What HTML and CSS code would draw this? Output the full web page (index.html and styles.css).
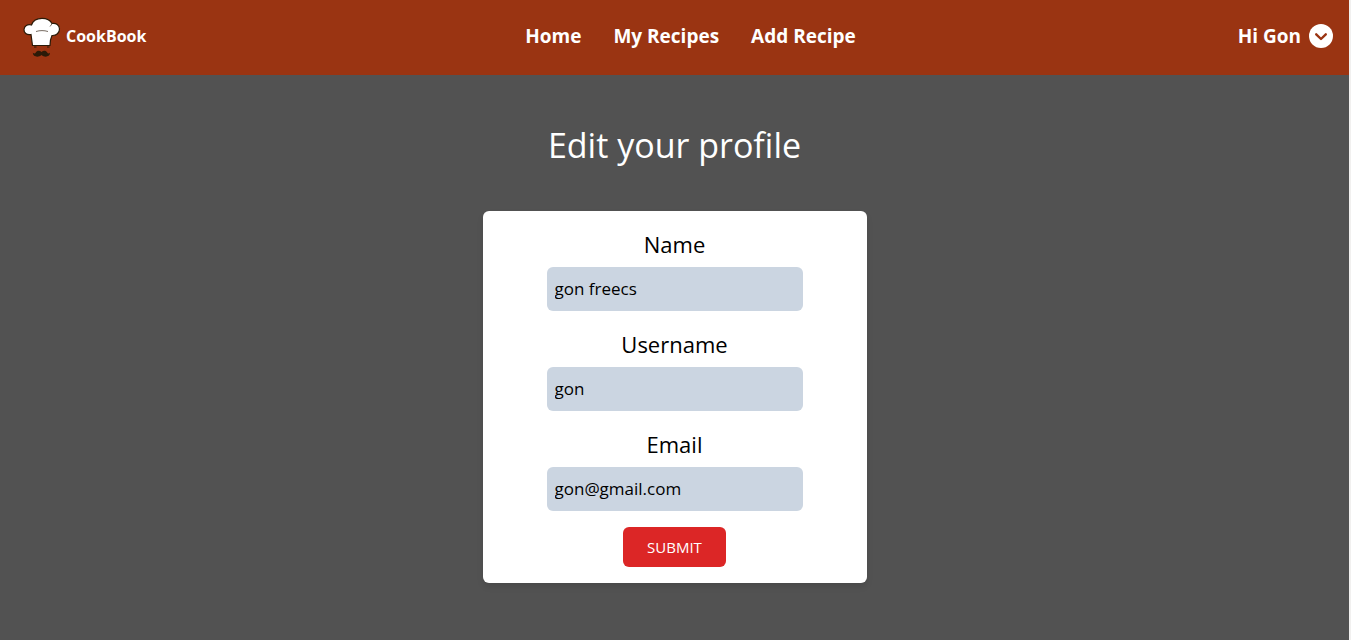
FILE: index.html
```html
<!DOCTYPE html>
<html lang="en">
<head>
<meta charset="utf-8">
<meta name="viewport" content="width=device-width, initial-scale=1">
<title>CookBook</title>
<link rel="stylesheet" href="styles.css">
</head>
<body class="page">
<header class="header">
  <a class="brand" href="#">
    <svg class="brand-logo" viewBox="0 -2 40 44" aria-hidden="true">
      <path d="M10.5 29.5 L9 18.5 C4.500 19.500 1.800 16.500 2 13.500 C2.300 9.800 5.500 8 9.500 9 C11 4.500 15.500 2.300 20 2.300 C25 2.300 28.500 4.500 30 7.500 C34 6.500 37.500 9.500 37.500 13 C37.500 17 34.500 19.700 30 19.500 C28.500 22.500 28 26 28 29.500 Z" fill="#fff" stroke="#2b1a08" stroke-width="1.200"/>
      <path d="M14 15.500 C18 14.300 22 14.300 26 15.500 M28 10.500 L30 7.800" fill="none" stroke="#54463a" stroke-width="0.800"/>
      <path d="M12 31 h2.500 M25 31 h2.500" fill="none" stroke="#2b1a08" stroke-width="1"/>
      <path d="M19.500 36 C17.500 34 14.800 34.500 13.800 36.600 C13 38 12 37.800 10.800 36.800 C10.800 41 16.500 41.800 19.500 39 C22.500 41.800 28 41 28 36.800 C27 37.800 26 38 25.200 36.600 C24.200 34.500 21.500 34 19.500 36 Z" fill="#2b1a08"/>
    </svg>
    <span>CookBook</span>
  </a>
  <nav class="nav">
    <a class="nav-link" href="#">Home</a>
    <a class="nav-link" href="#">My Recipes</a>
    <a class="nav-link" href="#">Add Recipe</a>
  </nav>
  <button class="account" type="button">
    <span>Hi Gon</span>
    <svg class="account-icon" viewBox="0 0 24 24" aria-hidden="true">
      <circle cx="12" cy="12" r="12" fill="#fff"/>
      <path d="M7.200 10.300 L12 15 L16.800 10.300" fill="none" stroke="#9a3412" stroke-width="2.400" stroke-linecap="round" stroke-linejoin="round"/>
    </svg>
  </button>
</header>
<main class="main">
  <h1 class="title">Edit your profile</h1>
  <form class="card">
    <div class="field">
      <label class="label" for="name">Name</label>
      <input class="input" id="name" type="text" value="gon freecs">
    </div>
    <div class="field">
      <label class="label" for="username">Username</label>
      <input class="input" id="username" type="text" value="gon">
    </div>
    <div class="field">
      <label class="label" for="email">Email</label>
      <input class="input" id="email" type="email" value="gon@gmail.com">
    </div>
    <button class="submit" type="submit">SUBMIT</button>
  </form>
</main>
</body>
</html>
```

FILE: styles.css
```css
* {
  box-sizing: border-box;
}

.page {
  margin: 0;
  min-height: 100vh;
  border-right: 2px solid #f1f0ef;
  background: #525252;
  color: #000;
  font-family: "Segoe UI", "Open Sans", sans-serif;
}

.header {
  display: grid;
  grid-template-columns: 1fr auto 1fr;
  align-items: center;
  padding: 14px 16px 17px;
  background: #9a3412;
  color: #fff;
  font-weight: 700;
}

.brand {
  display: flex;
  align-items: center;
  gap: 4px;
  padding-left: 6px;
  color: inherit;
  font-size: 16px;
  text-decoration: none;
}

.brand-logo {
  width: 40px;
  height: 44px;
}

.nav {
  display: flex;
  gap: 32px;
  padding-left: 32px;
}

.nav-link {
  color: inherit;
  font-size: 19px;
  line-height: 28px;
  text-decoration: none;
}

.account {
  display: flex;
  justify-self: end;
  align-items: center;
  gap: 8px;
  padding: 0;
  border: 0;
  background: none;
  color: inherit;
  font: inherit;
  font-size: 19px;
  line-height: 28px;
}

.account-icon {
  width: 24px;
  height: 24px;
}

.main {
  display: flex;
  flex-direction: column;
  align-items: center;
  gap: 46px;
  padding: 50px 16px;
}

.title {
  margin: 0;
  color: #fff;
  font-size: 34px;
  font-weight: 400;
  line-height: 40px;
}

.card {
  display: flex;
  flex-direction: column;
  align-items: center;
  gap: 16px;
  width: 100%;
  max-width: 384px;
  padding: 16px 64px;
  border-radius: 6px;
  background: #fff;
  box-shadow: 0 4px 6px rgba(0, 0, 0, 0.1);
}

.field {
  display: flex;
  flex-direction: column;
  gap: 6px;
  width: 100%;
}

.label {
  font-size: 22px;
  line-height: 34px;
  text-align: center;
}

.input {
  width: 100%;
  padding: 8px;
  border: 0;
  border-radius: 6px;
  background: #cbd5e1;
  color: #000;
  font: inherit;
  font-size: 17px;
  line-height: 28px;
}

.submit {
  padding: 8px 24px;
  border: 0;
  border-radius: 6px;
  background: #dc2626;
  color: #fff;
  font: inherit;
  font-size: 15px;
  line-height: 24px;
}
```
